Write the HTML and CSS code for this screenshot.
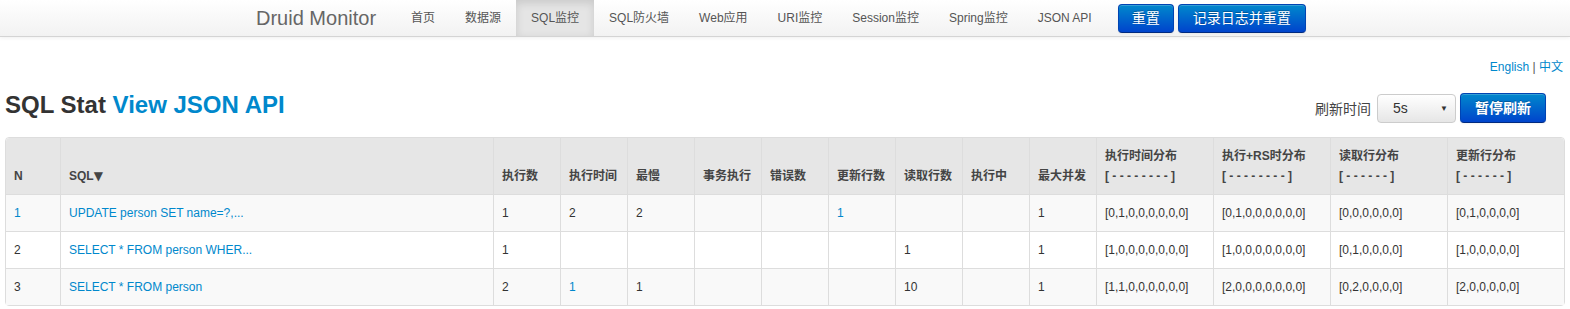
FILE: index.html
```html
<!DOCTYPE html>
<html lang="zh-CN">
<head>
    <meta charset="UTF-8">
    <meta name="viewport" content="width=device-width, initial-scale=1.0">
    <title>Druid Stat Index</title>
    <link rel="stylesheet" href="styles.css">
</head>
<body>
    <div class="navbar">
        <div class="navbar-inner">
            <a class="brand" href="#">Druid Monitor</a>
            <ul class="nav">
                <li><a href="#">首页</a></li>
                <li><a href="#">数据源</a></li>
                <li class="active"><a href="#">SQL监控</a></li>
                <li><a href="#">SQL防火墙</a></li>
                <li><a href="#">Web应用</a></li>
                <li><a href="#">URI监控</a></li>
                <li><a href="#">Session监控</a></li>
                <li><a href="#">Spring监控</a></li>
                <li><a href="#">JSON API</a></li>
            </ul>
            <div class="nav-actions">
                <button class="btn btn-primary">重置</button>
                <button class="btn btn-primary">记录日志并重置</button>
            </div>
        </div>
    </div>

    <div class="page">
        <div class="lang"><a href="#">English</a> | <a href="#">中文</a></div>

        <div class="title-row">
            <h3>SQL Stat <a href="#">View JSON API</a></h3>
            <div class="refresh">
                <label>刷新时间</label>
                <div class="select">5s<span class="arrow">▼</span></div>
                <button class="btn btn-primary btn-bold">暂停刷新</button>
            </div>
        </div>

        <table class="stat-table">
            <colgroup>
                <col class="c-n">
                <col class="c-sql">
                <col class="c-num"><col class="c-num"><col class="c-num">
                <col class="c-num"><col class="c-num"><col class="c-num">
                <col class="c-num"><col class="c-num"><col class="c-num">
                <col class="c-hist"><col class="c-hist"><col class="c-hist"><col class="c-hist">
            </colgroup>
            <thead>
                <tr>
                    <th>N</th>
                    <th>SQL<span class="sort">▼</span></th>
                    <th>执行数</th>
                    <th>执行时间</th>
                    <th>最慢</th>
                    <th>事务执行</th>
                    <th>错误数</th>
                    <th>更新行数</th>
                    <th>读取行数</th>
                    <th>执行中</th>
                    <th>最大并发</th>
                    <th>执行时间分布<br>[ - - - - - - - - ]</th>
                    <th>执行+RS时分布<br>[ - - - - - - - - ]</th>
                    <th>读取行分布<br>[ - - - - - - ]</th>
                    <th>更新行分布<br>[ - - - - - - ]</th>
                </tr>
            </thead>
            <tbody>
                <tr>
                    <td><a href="#">1</a></td>
                    <td><a href="#">UPDATE person SET name=?,...</a></td>
                    <td>1</td>
                    <td>2</td>
                    <td>2</td>
                    <td></td>
                    <td></td>
                    <td><a href="#">1</a></td>
                    <td></td>
                    <td></td>
                    <td>1</td>
                    <td>[0,1,0,0,0,0,0,0]</td>
                    <td>[0,1,0,0,0,0,0,0]</td>
                    <td>[0,0,0,0,0,0]</td>
                    <td>[0,1,0,0,0,0]</td>
                </tr>
                <tr>
                    <td>2</td>
                    <td><a href="#">SELECT * FROM person WHER...</a></td>
                    <td>1</td>
                    <td></td>
                    <td></td>
                    <td></td>
                    <td></td>
                    <td></td>
                    <td>1</td>
                    <td></td>
                    <td>1</td>
                    <td>[1,0,0,0,0,0,0,0]</td>
                    <td>[1,0,0,0,0,0,0,0]</td>
                    <td>[0,1,0,0,0,0]</td>
                    <td>[1,0,0,0,0,0]</td>
                </tr>
                <tr>
                    <td>3</td>
                    <td><a href="#">SELECT * FROM person</a></td>
                    <td>2</td>
                    <td><a href="#">1</a></td>
                    <td>1</td>
                    <td></td>
                    <td></td>
                    <td></td>
                    <td>10</td>
                    <td></td>
                    <td>1</td>
                    <td>[1,1,0,0,0,0,0,0]</td>
                    <td>[2,0,0,0,0,0,0,0]</td>
                    <td>[0,2,0,0,0,0]</td>
                    <td>[2,0,0,0,0,0]</td>
                </tr>
            </tbody>
        </table>
    </div>
</body>
</html>
```

FILE: styles.css
```css
body {
    margin: 0;
    font-family: "Liberation Sans", Arial, "Noto Sans CJK SC", sans-serif;
    font-size: 12px;
    color: #333;
    background-color: #fff;
}
a {
    color: #0088cc;
    text-decoration: none;
}

/* top bar */
.navbar {
    height: 36px;
    background: linear-gradient(#ffffff, #f2f2f2);
    border-bottom: 1px solid #d4d4d4;
    box-shadow: 0 1px 4px rgba(0, 0, 0, 0.065);
}
.navbar-inner {
    width: 1058px;
    height: 36px;
    margin: 0 auto;
    display: flex;
    align-items: center;
}
.brand {
    font-size: 20px;
    line-height: 36px;
    color: #666;
    padding: 0 20px;
    margin-left: -20px;
}
.nav {
    display: flex;
    list-style: none;
    margin: 0;
    padding: 0;
}
.nav a {
    display: block;
    padding: 10px 15px;
    line-height: 16px;
    color: #555;
}
.nav .active a {
    background-color: #e5e5e5;
    box-shadow: inset 0 3px 8px rgba(0, 0, 0, 0.125);
}
.nav-actions {
    display: flex;
    gap: 4px;
    margin-left: 11px;
}
.btn {
    font-family: inherit;
    font-size: 14px;
    height: 29px;
    line-height: 27px;
    padding: 0 13px;
    border-radius: 4px;
    cursor: pointer;
}
.btn-primary {
    color: #fff;
    background: linear-gradient(#0088cc, #0044cc);
    border: 1px solid #0044b3;
    border-bottom-color: #002a80;
    text-shadow: 0 -1px 0 rgba(0, 0, 0, 0.25);
    box-shadow: inset 0 1px 0 rgba(255, 255, 255, 0.2), 0 1px 2px rgba(0, 0, 0, 0.05);
}
.nav-actions .btn:last-child {
    padding: 0 14px;
}
.btn-bold {
    font-weight: bold;
    height: 30px;
    padding: 0 14px;
}

/* page */
.page {
    padding: 0 5px;
}
.lang {
    text-align: right;
    line-height: 18px;
    margin-top: 21px;
    padding-right: 2px;
    color: #555;
}
.title-row {
    display: flex;
    justify-content: space-between;
    align-items: flex-start;
    margin-top: 17px;
    height: 30px;
}
.title-row h3 {
    margin: 0;
    font-size: 24px;
    line-height: 24px;
    font-weight: bold;
    color: #333;
}
.refresh {
    display: flex;
    align-items: center;
    margin-right: 19px;
}
.refresh label {
    font-size: 14px;
    color: #444;
    margin-right: 6px;
}
.select {
    position: relative;
    box-sizing: border-box;
    width: 79px;
    height: 29px;
    line-height: 27px;
    padding-left: 15px;
    font-size: 14px;
    color: #333;
    background: linear-gradient(#ffffff, #e6e6e6);
    border: 1px solid #ccc;
    border-radius: 4px;
    margin-right: 4px;
}
.select .arrow {
    position: absolute;
    right: 7px;
    top: 0;
    font-size: 8px;
    color: #333;
}

/* stat table */
.stat-table {
    width: 1560px;
    table-layout: fixed;
    border-collapse: separate;
    border-spacing: 0;
    border: 1px solid #ddd;
    border-radius: 4px;
    margin-top: 14px;
}
.c-n { width: 54px; }
.c-sql { width: 433px; }
.c-num { width: 67px; }
.c-hist { width: 117px; }
.stat-table th,
.stat-table td {
    padding: 8px;
    line-height: 20px;
    text-align: left;
    vertical-align: top;
    border-left: 1px solid #ddd;
    border-top: 1px solid #ddd;
    white-space: nowrap;
    overflow: hidden;
}
.stat-table th:first-child,
.stat-table td:first-child {
    border-left: none;
}
.stat-table thead th {
    border-top: none;
    background-color: #e6e6e6;
    vertical-align: bottom;
    font-weight: bold;
    color: #444;
}
.stat-table thead th:first-child {
    border-top-left-radius: 4px;
}
.stat-table thead th:last-child {
    border-top-right-radius: 4px;
}
.stat-table tbody tr:nth-child(odd) td {
    background-color: #f9f9f9;
}
.sort {
    font-family: "DejaVu Sans", sans-serif;
    font-size: 12px;
    font-weight: normal;
}
```
